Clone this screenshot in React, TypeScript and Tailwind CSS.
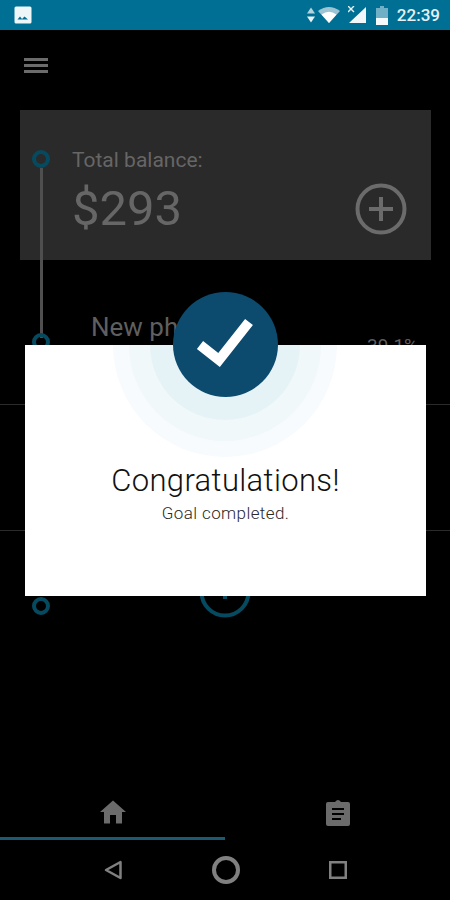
function TimelineDot({ className }: { className: string }) {
  return <div className={`absolute left-[32px] h-[18px] w-[18px] rounded-full border-[4px] border-[#064a60] ${className}`} />;
}

function StatusBar() {
  return (
    <div className="flex h-[30px] shrink-0 items-center justify-between bg-[#006f94] pl-[14px] pr-[10px]">
      <svg width="18" height="18" viewBox="0 0 18 18">
        <rect x="0.5" y="0.5" width="17" height="17" rx="1.5" fill="#eef6f8" />
        <path d="M3.5 13.5 L6 10.5 L8 13 L10.5 10.5 L14 13.5 Z" fill="#006f94" />
      </svg>
      <div className="flex items-center">
        <svg width="10" height="16" viewBox="0 0 10 16" className="mr-[2px]">
          <path d="M5 0.5 L9 6.5 L1 6.5 Z" fill="#b5d3de" />
          <path d="M5 15.5 L9 9.5 L1 9.5 Z" fill="#e8f2f5" />
        </svg>
        <svg width="22" height="16" viewBox="0 0 22 16" className="mr-[8px]">
          <path d="M0 4 Q11 -4 22 4 L11 16 Z" fill="#9cc4d2" />
          <path d="M3.5 7.5 Q11 2 18.5 7.5 L11 16 Z" fill="#ffffff" />
        </svg>
        <svg width="18" height="18" viewBox="0 0 18 18" className="mr-[10px]">
          <path d="M18 1 L18 17 L1 17 Z" fill="#f2f8fa" />
          <path d="M0 0 L6 6 M6 0 L0 6" stroke="#e8f2f5" strokeWidth="1.4" />
        </svg>
        <svg width="12" height="19" viewBox="0 0 12 19" className="mr-[9px]">
          <path d="M4 0 H8 V2 H12 V19 H0 V2 H4 Z" fill="#6fb0c6" />
          <rect x="0" y="12" width="12" height="7" fill="#f4f9fa" />
        </svg>
        <span className="font-['Roboto',sans-serif] text-[17px] font-medium leading-none text-[#e6f1f5]">22:39</span>
      </div>
    </div>
  );
}

function Background() {
  return (
    <div className="flex flex-1 flex-col font-['Roboto',sans-serif]">
      <div className="flex h-[80px] shrink-0 flex-col justify-center gap-[3px] pb-[10px] pl-[24px]">
        <div className="h-[3px] w-[24px] bg-[#6b6b6b]" />
        <div className="h-[3px] w-[24px] bg-[#6b6b6b]" />
        <div className="h-[3px] w-[24px] bg-[#6b6b6b]" />
      </div>

      <div className="mx-[20px] flex h-[150px] w-[411px] shrink-0 items-end justify-between bg-[#2a2a2a] pb-[23px] pl-[52px] pr-[24px]">
        <div>
          <div className="text-[21px] leading-[24px] text-[#666666]">Total balance:</div>
          <div className="mt-[9px] text-[49px] leading-[56px] text-[#666666]">$293</div>
        </div>
        <svg width="52" height="52" viewBox="0 0 52 52" fill="none" stroke="#6b6b6b" strokeWidth="4" className="mb-[2px]">
          <circle cx="26" cy="26" r="23.5" />
          <path d="M26 14 V38 M14 26 H38" />
        </svg>
      </div>

      <div className="flex h-[145px] shrink-0 items-start justify-between border-b border-[#2b2b2b] pl-[91px] pr-[32px] pt-[52px]">
        <span className="text-[26px] leading-[30px] text-[#5f5f5f]">New phone</span>
        <span className="mt-[22px] text-[19px] leading-[24px] text-[#5f5f5f]">39.1%</span>
      </div>
      <div className="h-[126px] shrink-0 border-b border-[#2b2b2b]" />
      <div className="flex h-[80px] shrink-0 justify-center">
        <svg width="52" height="52" viewBox="0 0 52 52" fill="none" stroke="#064a60" strokeWidth="4" className="mt-[35px]">
          <circle cx="26" cy="26" r="23.5" />
          <path d="M26 20 V33" />
        </svg>
      </div>

      <div className="flex-1" />

      <div className="flex h-[42px] shrink-0 items-center">
        <div className="flex flex-1 justify-center">
          <svg width="26" height="24" viewBox="0 0 26 24">
            <path d="M13 0.5 L26 12 H22 V23.5 H16 V15 H10 V23.5 H4 V12 H0 Z" fill="#6b6b6b" />
          </svg>
        </div>
        <div className="flex flex-1 justify-center">
          <svg width="24" height="27" viewBox="0 0 24 27">
            <path d="M9 3 Q12 -1 15 3 H22 Q24 3 24 5 V25 Q24 27 22 27 H2 Q0 27 0 25 V5 Q0 3 2 3 Z" fill="#6b6b6b" />
            <path d="M6 10 H18 M6 15 H18 M6 20 H15" stroke="#000" strokeWidth="2" />
          </svg>
        </div>
      </div>
      <div className="mt-[4px] h-[3px] w-[225px] shrink-0 bg-[#1d5a70]" />
      <div className="flex h-[60px] shrink-0 items-center justify-between pl-[104px] pr-[103px]">
        <svg width="18" height="20" viewBox="0 0 18 20" fill="none" stroke="#808080" strokeWidth="2.5" strokeLinejoin="round">
          <path d="M16.5 2 V18 L2 10 Z" />
        </svg>
        <svg width="28" height="28" viewBox="0 0 28 28" fill="none" stroke="#808080" strokeWidth="4">
          <circle cx="14" cy="14" r="12" />
        </svg>
        <svg width="18" height="18" viewBox="0 0 18 18" fill="none" stroke="#808080" strokeWidth="2.5">
          <rect x="1.25" y="1.25" width="15.5" height="15.5" />
        </svg>
      </div>
    </div>
  );
}

export default function App() {
  return (
    <div className="relative flex h-[900px] w-[450px] flex-col overflow-hidden bg-black">
      <StatusBar />
      <Background />

      {/* timeline behind the card content */}
      <div className="absolute left-[40px] top-[168px] h-[170px] w-[3px] bg-[#4f4f4f]" />
      <TimelineDot className="top-[150px]" />
      <TimelineDot className="top-[333px]" />
      <TimelineDot className="top-[597px]" />

      {/* goal completed dialog */}
      <div className="absolute left-[25px] top-[345px] h-[251px] w-[401px] overflow-hidden bg-white font-['Roboto',sans-serif]">
        <div className="absolute left-[88px] top-[-112px] h-[224px] w-[224px] rounded-full bg-[#f7fbfd]" />
        <div className="absolute left-[104px] top-[-96px] h-[192px] w-[192px] rounded-full bg-[#f0f8fa]" />
        <div className="absolute left-[125px] top-[-75px] h-[150px] w-[150px] rounded-full bg-[#e6f3f6]" />
        <div className="relative flex flex-col items-center pt-[118px]">
          <div className="text-[31px] font-light leading-[36px] tracking-[0.35px] text-[#111111]">Congratulations!</div>
          <div className="mt-[4px] text-[17px] font-light leading-[20px] tracking-[0.4px] text-[#2a2a2a]">Goal completed.</div>
        </div>
      </div>
      <div className="absolute left-[173px] top-[292px] flex h-[105px] w-[105px] items-center justify-center rounded-full bg-[#0c4a6e]">
        <svg width="60" height="52" viewBox="0 0 60 52" className="mb-[6px]">
          <path d="M4 29 L23 44 L53 6" fill="none" stroke="#ffffff" strokeWidth="10" />
        </svg>
      </div>
    </div>
  );
}
